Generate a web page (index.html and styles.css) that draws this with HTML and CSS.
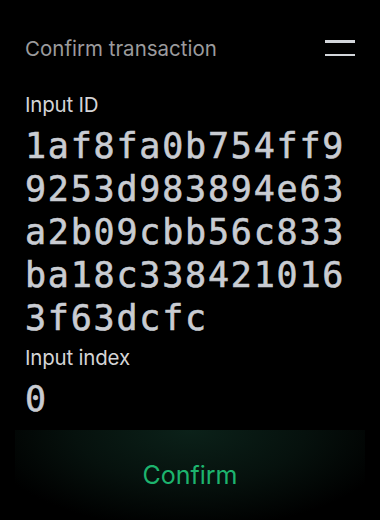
FILE: index.html
```html
<!DOCTYPE html>
<html lang="en">
<head>
  <meta charset="UTF-8">
  <meta name="viewport" content="width=device-width, initial-scale=1.0">
  <title>Confirm transaction</title>
  <link rel="stylesheet" href="styles.css">
</head>
<body>
  <header class="top-bar">
    <h1>Confirm transaction</h1>
    <button class="menu-btn" aria-label="Menu">
      <span></span>
      <span></span>
    </button>
  </header>

  <main class="content">
    <div class="field">
      <div class="field-label">Input ID</div>
      <div class="field-value">1af8fa0b754ff99253d983894e63a2b09cbb56c833ba18c3384210163f63dcfc</div>
    </div>
    <div class="field">
      <div class="field-label">Input index</div>
      <div class="field-value">0</div>
    </div>
  </main>

  <footer class="actions">
    <button class="confirm-btn">Confirm</button>
  </footer>
</body>
</html>
```

FILE: styles.css
```css
html, body {
  margin: 0;
  padding: 0;
  background-color: #000;
}
body {
  font-family: Inter, "Noto Sans", sans-serif;
  width: 380px;
  height: 520px;
  display: flex;
  flex-direction: column;
  overflow: hidden;
}
.top-bar {
  display: flex;
  align-items: center;
  justify-content: space-between;
  padding: 34px 25px 0 25px;
  height: 28px;
}
.top-bar h1 {
  margin: 0;
  font-size: 20.5px;
  font-weight: 400;
  color: #9b9b9d;
  letter-spacing: 0;
}
.menu-btn {
  background: none;
  border: none;
  padding: 0;
  width: 30px;
  display: flex;
  flex-direction: column;
  gap: 11px;
  cursor: pointer;
}
.menu-btn span {
  display: block;
  height: 2.5px;
  background-color: #d3d6db;
}
.content {
  flex: 1;
  padding: 31px 25px 0 25px;
}
.field-label {
  font-size: 20.5px;
  color: #d4d4d6;
  letter-spacing: -0.2px;
  line-height: 24px;
}
.field-value {
  font-family: "DejaVu Sans Mono", "Liberation Mono", monospace;
  font-size: 35px;
  line-height: 43px;
  letter-spacing: 1.8px;
  color: #c9ccd2;
  -webkit-text-stroke: 0.6px #c9ccd2;
  max-width: 330px;
  word-break: break-all;
  margin-top: 8px;
  margin-bottom: 6px;
}
.actions {
  padding: 0 15px;
}
.confirm-btn {
  width: 100%;
  height: 90px;
  border: none;
  background: radial-gradient(ellipse 60% 110% at 50% 0%, #0b2119 0%, #06110d 55%, #000 100%);
  color: #1db46e;
  font-family: Inter, "Noto Sans", sans-serif;
  font-size: 25px;
  cursor: pointer;
}
```
